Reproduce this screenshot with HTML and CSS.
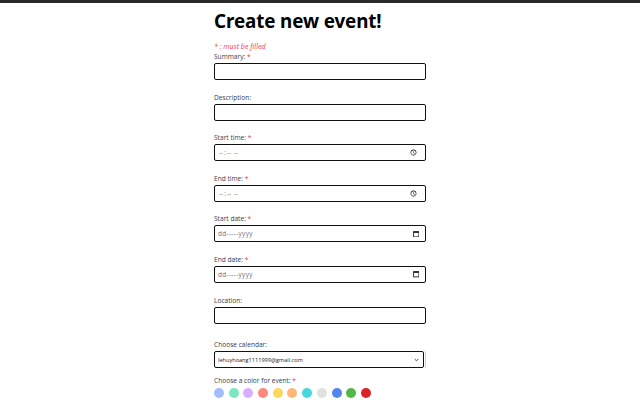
FILE: index.html
```html
<!DOCTYPE html>
<html lang="en">
<head>
<meta charset="utf-8">
<title>Create new event</title>
<link rel="stylesheet" href="styles.css">
</head>
<body>
<div class="topbar"></div>
<main class="form">
  <h1 class="title">Create new event!</h1>
  <p class="note">* : must be filled</p>

  <div class="field">
    <label class="label">Summary: <span class="req">*</span></label>
    <input class="box" type="text">
  </div>
  <div class="field">
    <label class="label">Description:</label>
    <input class="box" type="text">
  </div>
  <div class="field">
    <label class="label">Start time: <span class="req">*</span></label>
    <input class="box time" type="time">
  </div>
  <div class="field">
    <label class="label">End time: <span class="req">*</span></label>
    <input class="box time" type="time">
  </div>
  <div class="field">
    <label class="label">Start date: <span class="req">*</span></label>
    <div class="box datebox">
      <span class="ph">dd-----yyyy</span>
      <svg class="calicon" viewBox="0 0 8 8" width="6.5" height="6.5"><rect x="0.75" y="0.75" width="6.5" height="6.5" fill="none" stroke="#222" stroke-width="1.1"/><rect x="0.75" y="0.75" width="6.5" height="1.6" fill="#222"/></svg>
    </div>
  </div>
  <div class="field">
    <label class="label">End date: <span class="req">*</span></label>
    <div class="box datebox">
      <span class="ph">dd-----yyyy</span>
      <svg class="calicon" viewBox="0 0 8 8" width="6.5" height="6.5"><rect x="0.75" y="0.75" width="6.5" height="6.5" fill="none" stroke="#222" stroke-width="1.1"/><rect x="0.75" y="0.75" width="6.5" height="1.6" fill="#222"/></svg>
    </div>
  </div>
  <div class="field">
    <label class="label">Location:</label>
    <input class="box" type="text">
  </div>
  <div class="field field-cal">
    <label class="label">Choose calendar:</label>
    <div class="selwrap">
      <div class="box selectbox">
        <span class="selval">lehuyhoang1111999@gmail.com</span>
        <svg class="chev" viewBox="0 0 6 4" width="5" height="4"><path d="M0.8 0.8 L3 3 L5.2 0.8" fill="none" stroke="#222" stroke-width="1"/></svg>
      </div>
    </div>
  </div>
  <div class="field field-color">
    <label class="label">Choose a color for event: <span class="req">*</span></label>
    <div class="dots">
      <span class="dot c1"></span>
      <span class="dot c2"></span>
      <span class="dot c3"></span>
      <span class="dot c4"></span>
      <span class="dot c5"></span>
      <span class="dot c6"></span>
      <span class="dot c7"></span>
      <span class="dot c8"></span>
      <span class="dot c9"></span>
      <span class="dot c10"></span>
      <span class="dot c11"></span>
    </div>
  </div>
</main>
</body>
</html>
```

FILE: styles.css
```css
html, body {
  margin: 0;
  padding: 0;
  background: #ffffff;
}
body {
  font-family: "Open Sans", "Noto Sans", sans-serif;
  color: #2f3640;
  overflow: hidden;
}
.topbar {
  height: 3px;
  background: #2b2b2b;
}
.form {
  width: 212px;
  margin: 0 auto;
  display: flex;
  flex-direction: column;
}
.title {
  margin: 6px 0 0 0;
  font-family: "Noto Sans", sans-serif;
  font-size: 18.8px;
  line-height: 24px;
  font-weight: 700;
  color: #000;
  letter-spacing: -0.1px;
}
.note {
  margin: 9px 0 0 0;
  font-size: 7.1px;
  line-height: 9px;
  font-style: italic;
  color: #f2404f;
}
.field {
  display: flex;
  flex-direction: column;
  margin-bottom: 11.6px;
}
.label {
  font-size: 6.6px;
  line-height: 11px;
  margin-bottom: 1px;
  color: #34404f;
}
.req {
  color: #ee3344;
}
.box {
  box-sizing: border-box;
  width: 212px;
  height: 17px;
  margin: 0;
  border: 1px solid #111;
  border-radius: 2px;
  background: #fff;
  font-family: "Open Sans", "Noto Sans", sans-serif;
  font-size: 6px;
  color: #333;
  padding: 0 4px;
}
.time {
  color: #777;
  font-size: 6.5px;
  letter-spacing: 0.9px;
  padding: 0 5px 0 3px;
}
.datebox {
  display: flex;
  align-items: center;
  justify-content: space-between;
  padding: 0 6px 0 3px;
}
.ph {
  color: #6e6a80;
  font-size: 6.4px;
  letter-spacing: 0.35px;
}
.calicon {
  display: block;
}
.field-cal {
  margin-top: 4px;
  margin-bottom: 6.5px;
}
.selwrap {
  display: flex;
  width: 212px;
  border-right: 1px solid #d0d0d0;
  box-sizing: border-box;
  border-radius: 2px;
}
.selectbox {
  width: 210px;
  display: flex;
  align-items: center;
  justify-content: space-between;
  padding: 0 4px 0 3px;
}
.selval {
  color: #222;
  font-size: 5.6px;
}
.chev {
  display: block;
}
.dots {
  display: flex;
  gap: 4.7px;
  margin-top: 1px;
}
.dot {
  width: 10px;
  height: 10px;
  border-radius: 50%;
  display: block;
}
.c1 { background: #a4bdfc; }
.c2 { background: #7ae7bf; }
.c3 { background: #dbadff; }
.c4 { background: #ff887c; }
.c5 { background: #fbd75b; }
.c6 { background: #ffb878; }
.c7 { background: #46d6db; }
.c8 { background: #e1e1e1; }
.c9 { background: #5484ed; }
.c10 { background: #51b749; }
.c11 { background: #dc2127; }
```
